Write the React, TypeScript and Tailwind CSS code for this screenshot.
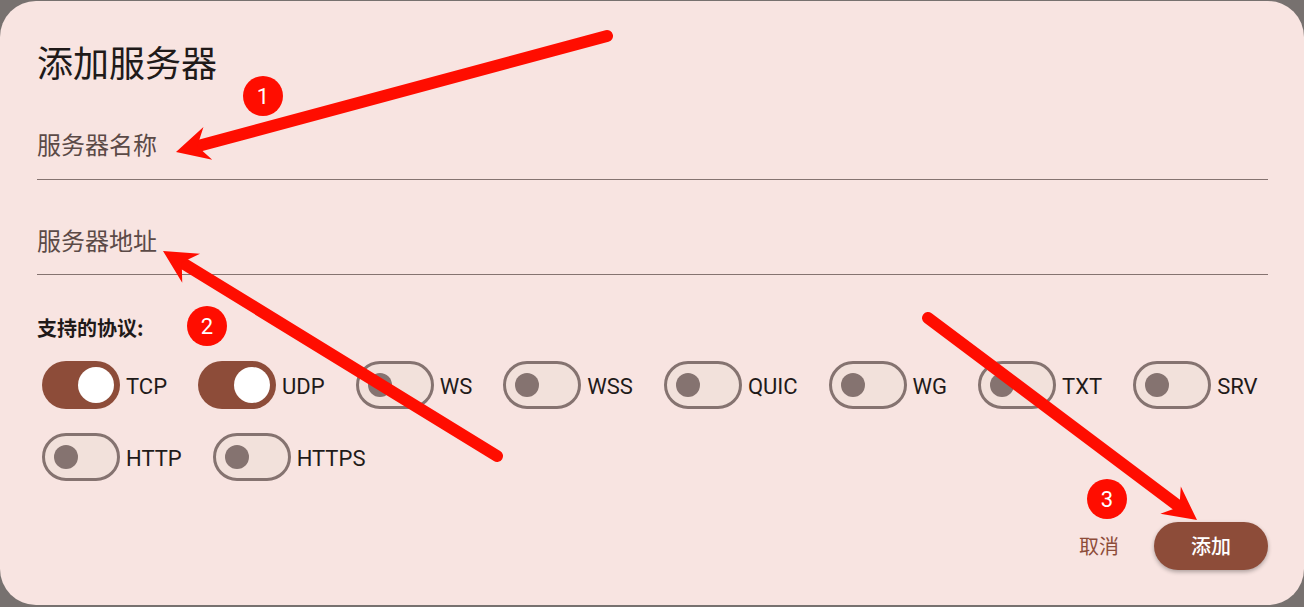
import React from "react";

const protocols = [
  [
    { name: "TCP", on: true },
    { name: "UDP", on: true },
    { name: "WS", on: false },
    { name: "WSS", on: false },
    { name: "QUIC", on: false },
    { name: "WG", on: false },
    { name: "TXT", on: false },
    { name: "SRV", on: false },
  ],
  [
    { name: "HTTP", on: false },
    { name: "HTTPS", on: false },
  ],
];

function Toggle({ on }: { on: boolean }) {
  if (on) {
    return (
      <div className="w-[78px] h-[48px] rounded-full bg-[#8d4c39] flex items-center justify-end pr-[6px] shrink-0">
        <div className="w-[36px] h-[36px] rounded-full bg-white" />
      </div>
    );
  }
  return (
    <div className="w-[78px] h-[48px] rounded-full bg-[#f2e1db] border-[3px] border-[#857370] flex items-center pl-[9px] shrink-0">
      <div className="w-[24px] h-[24px] rounded-full bg-[#857370]" />
    </div>
  );
}

// red annotation arrow: line + swept arrowhead
function Arrow({ x1, y1, x2, y2 }: { x1: number; y1: number; x2: number; y2: number }) {
  const dx = x2 - x1;
  const dy = y2 - y1;
  const len = Math.hypot(dx, dy);
  const ux = dx / len;
  const uy = dy / len;
  const px = -uy;
  const py = ux;
  const head = 33;
  const half = 17;
  const notch = 22;
  const bx = x2 - ux * head;
  const by = y2 - uy * head;
  const nx = x2 - ux * notch;
  const ny = y2 - uy * notch;
  const pts = [
    [x2, y2],
    [bx + px * half, by + py * half],
    [nx, ny],
    [bx - px * half, by - py * half],
  ]
    .map((p) => p.join(","))
    .join(" ");
  return (
    <g>
      <line x1={x1} y1={y1} x2={nx} y2={ny} stroke="#ff0d00" strokeWidth={12} strokeLinecap="round" />
      <polygon points={pts} fill="#ff0d00" />
    </g>
  );
}

function Badge({ cx, cy, n }: { cx: number; cy: number; n: number }) {
  return (
    <g>
      <circle cx={cx} cy={cy} r={20} fill="#ff0d00" />
      <text
        x={cx}
        y={cy + 8}
        textAnchor="middle"
        fill="white"
        fontSize={22}
        fontFamily="Roboto, sans-serif"
      >
        {n}
      </text>
    </g>
  );
}

export default function App() {
  return (
    <div className="relative w-[1304px] h-[607px] bg-[#77716f] pt-[1px] overflow-hidden">
      <div
        className="h-[604px] rounded-[36px] bg-[#f8e4e1] pl-[37px] pr-[36px] pt-[38px] flex flex-col"
        style={{ fontFamily: '"Noto Sans CJK SC", Roboto, sans-serif' }}
      >
        <h2 className="h-[44px] leading-[44px] text-[36px] text-[#201a19]">添加服务器</h2>

        <div className="mt-[29px] h-[68px] pb-[4px] flex items-center border-b-[1.5px] border-[#857370]">
          <span className="text-[24px] text-[#5b4a47]">服务器名称</span>
        </div>
        <div className="mt-[27px] h-[68px] pb-[2px] flex items-center border-b-[1.5px] border-[#857370]">
          <span className="text-[24px] text-[#5b4a47]">服务器地址</span>
        </div>

        <div className="mt-[39px] h-[28px] leading-[28px] text-[20px] font-bold text-[#1f1a19]">
          支持的协议:
        </div>

        <div className="mt-[19px] pl-[5px] flex flex-col gap-[24px]">
          {protocols.map((row, i) => (
            <div key={i} className="flex gap-[31px]">
              {row.map((p) => (
                <div key={p.name} className="flex items-center gap-[6px]">
                  <Toggle on={p.on} />
                  <span
                    className="text-[22px] pt-[3px] text-[#1f1a19]"
                    style={{ fontFamily: "Roboto, sans-serif" }}
                  >
                    {p.name}
                  </span>
                </div>
              ))}
            </div>
          ))}
        </div>

        <div className="mt-[41px] flex justify-end items-center gap-[35px]">
          <button className="text-[20px] text-[#8d4c39]">取消</button>
          <button className="h-[48px] px-[37px] rounded-full bg-[#8d4c39] text-white text-[20px] font-medium shadow-[0_2px_4px_rgba(0,0,0,0.3)]">
            添加
          </button>
        </div>
      </div>

      <svg className="absolute inset-0 pointer-events-none" width={1304} height={607}>
        <Arrow x1={607} y1={36} x2={176} y2={152} />
        <Arrow x1={497} y1={456} x2={163} y2={251} />
        <Arrow x1={928} y1={318} x2={1197} y2={520} />
        <Badge cx={263} cy={96} n={1} />
        <Badge cx={207} cy={326} n={2} />
        <Badge cx={1107} cy={499} n={3} />
      </svg>
    </div>
  );
}
